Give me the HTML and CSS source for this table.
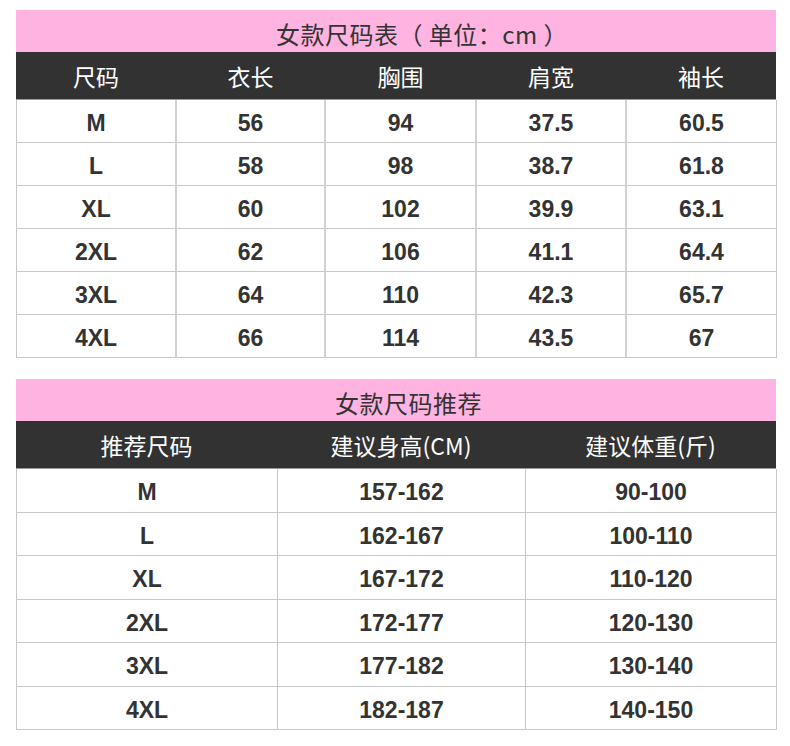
FILE: index.html
```html
<!DOCTYPE html>
<html lang="zh">
<head>
<meta charset="utf-8">
<link rel="stylesheet" href="styles.css">
</head>
<body>
<div class="page">
  <section class="table t1">
    <div class="title">女款尺码表（ 单位：cm ）</div>
    <div class="head">
      <div>尺码</div><div>衣长</div><div>胸围</div><div>肩宽</div><div>袖长</div>
    </div>
    <div class="body">
      <div>M</div><div>56</div><div>94</div><div>37.5</div><div>60.5</div>
      <div>L</div><div>58</div><div>98</div><div>38.7</div><div>61.8</div>
      <div>XL</div><div>60</div><div>102</div><div>39.9</div><div>63.1</div>
      <div>2XL</div><div>62</div><div>106</div><div>41.1</div><div>64.4</div>
      <div>3XL</div><div>64</div><div>110</div><div>42.3</div><div>65.7</div>
      <div>4XL</div><div>66</div><div>114</div><div>43.5</div><div>67</div>
    </div>
  </section>
  <section class="table t2">
    <div class="title">女款尺码推荐</div>
    <div class="head">
      <div>推荐尺码</div><div>建议身高(CM)</div><div>建议体重(斤)</div>
    </div>
    <div class="body">
      <div>M</div><div>157-162</div><div>90-100</div>
      <div>L</div><div>162-167</div><div>100-110</div>
      <div>XL</div><div>167-172</div><div>110-120</div>
      <div>2XL</div><div>172-177</div><div>120-130</div>
      <div>3XL</div><div>177-182</div><div>130-140</div>
      <div>4XL</div><div>182-187</div><div>140-150</div>
    </div>
  </section>
</div>
</body>
</html>
```
FILE: styles.css
```css
html, body {
  margin: 0;
  padding: 0;
  background: #fff;
}
.page {
  padding: 10px 0 0 16px;
  width: 760px;
  display: flex;
  flex-direction: column;
  gap: 21px;
}
.table {
  width: 760px;
}
.title {
  height: 42px;
  box-sizing: border-box;
  padding-top: 4px;
  background: #feb3e0;
  color: #333;
  font-family: "Noto Sans CJK SC", sans-serif;
  font-size: 24px;
  letter-spacing: 0.5px;
  display: flex;
  align-items: center;
  justify-content: center;
}
.t1 .title {
  padding-left: 52px;
}
.t2 .title {
  padding-left: 25px;
}
.head {
  height: 47px;
  background: #323232;
  border-bottom: 1px solid #9a9a9a;
  color: #fff;
  font-family: "Noto Sans CJK SC", sans-serif;
  font-size: 23px;
  display: grid;
}
.head > div {
  display: flex;
  align-items: center;
  justify-content: center;
}
.body {
  display: grid;
  border-left: 1px solid #c8c8c8;
}
.body > div {
  height: 42px;
  box-sizing: border-box;
  padding-top: 5px;
  border-right: 1px solid #c8c8c8;
  border-bottom: 1px solid #c8c8c8;
  display: flex;
  align-items: center;
  justify-content: center;
  font-family: "Liberation Sans", Arial, sans-serif;
  font-weight: bold;
  font-size: 23px;
  color: #333;
}
.t1 .body > div {
  height: 43px;
}
.t1 .head, .t1 .body {
  grid-template-columns: 160px 149px 151px 150px 150px;
}
.t1 .body > div {
  border-right: 2px solid #d2d2d2;
}
.t1 .body > div:nth-child(5n) {
  border-right: 1px solid #c8c8c8;
}
.t2 .head, .t2 .body {
  grid-template-columns: 261px 248px 251px;
}
.t2 .body > div {
  height: 43.5px;
}
```
